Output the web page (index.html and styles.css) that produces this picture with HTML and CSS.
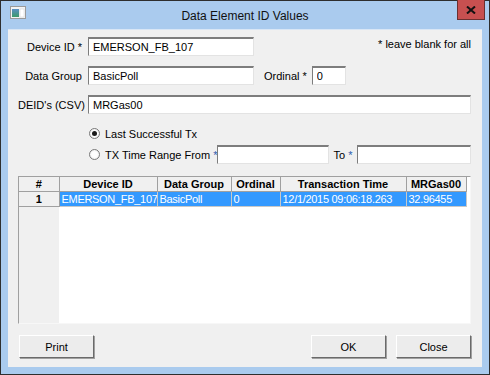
FILE: index.html
```html
<!DOCTYPE html>
<html lang="en">
<head>
  <meta charset="UTF-8" />
  <title>Data Element ID Values</title>
  <link rel="stylesheet" href="styles.css">
</head>
<body>
  <div class="window">
    <div class="titlebar">
      <svg class="app-icon" width="16" height="13" viewBox="0 0 16 13">
        <defs>
          <linearGradient id="ig" x1="0" y1="0" x2="0" y2="1">
            <stop offset="0" stop-color="#5a8fc4"/>
            <stop offset="1" stop-color="#3c9a6a"/>
          </linearGradient>
        </defs>
        <rect x="0.5" y="0.5" width="15" height="12" fill="#f4f4f4" stroke="#9a9a9a"/>
        <rect x="2" y="3" width="7" height="8" fill="url(#ig)"/>
        <rect x="10" y="3" width="4" height="8" fill="#fff" stroke="#d0d0d0" stroke-width="0.5"/>
      </svg>
      <span class="title">Data Element ID Values</span>
      <button class="close-x" title="Close">
        <svg width="10" height="8" viewBox="0 0 10 8"><path d="M1 0.5 L9 7.5 M9 0.5 L1 7.5" stroke="#111" stroke-width="2"/></svg>
      </button>
    </div>

    <div class="client">
      <div class="fila">
        <label class="lbl">Device ID *</label>
        <input class="txt w-med" type="text" value="EMERSON_FB_107">
        <span class="nota">* leave blank for all</span>
      </div>

      <div class="fila">
        <label class="lbl">Data Group</label>
        <input class="txt w-med" type="text" value="BasicPoll">
        <label class="lbl-ord">Ordinal *</label>
        <input class="txt w-ord" type="text" value="0">
      </div>

      <div class="fila">
        <label class="lbl">DEID's (CSV)</label>
        <input class="txt w-full" type="text" value="MRGas00">
      </div>

      <div class="fila radio-fila primera">
        <span class="radio on"></span>
        <span>Last Successful Tx</span>
      </div>

      <div class="fila radio-fila">
        <span class="radio"></span>
        <span class="rango">TX Time Range From <b class="ast">*</b></span>
        <input class="txt w-desde" type="text">
        <span class="lbl-to">To <b class="ast">*</b></span>
        <input class="txt w-hasta" type="text">
      </div>

      <div class="grid">
        <table>
          <colgroup>
            <col style="width:40px"><col style="width:98px"><col style="width:74px">
            <col style="width:49px"><col style="width:126px"><col style="width:60px">
          </colgroup>
          <thead>
            <tr>
              <th>#</th><th>Device ID</th><th>Data Group</th><th>Ordinal</th><th>Transaction Time</th><th>MRGas00</th>
            </tr>
          </thead>
          <tbody>
            <tr class="sel">
              <th>1</th><td>EMERSON_FB_107</td><td>BasicPoll</td><td>0</td><td>12/1/2015 09:06:18.263</td><td>32.96455</td>
            </tr>
          </tbody>
        </table>
      </div>

      <div class="botones">
        <button class="btn">Print</button>
        <span class="relleno"></span>
        <button class="btn">OK</button>
        <button class="btn">Close</button>
      </div>
    </div>
  </div>
</body>
</html>
```

FILE: styles.css
```css
body {
  margin: 0;
  padding: 0;
  font-family: "Liberation Sans", Arial, sans-serif;
  font-size: 11px;
  color: #000;
  background: #fff;
}

.window {
  width: 490px;
  height: 375px;
  box-sizing: border-box;
  border: 1px solid #2e2e2e;
  background: #aacbee;
  display: flex;
  flex-direction: column;
}

/* Barra de titulo */
.titlebar {
  height: 28px;
  display: flex;
  align-items: flex-start;
  position: relative;
}

.app-icon {
  margin: 5px 0 0 9px;
}

.title {
  position: absolute;
  left: 0;
  right: 0;
  top: 8px;
  text-align: center;
  font-size: 12px;
  color: #111;
}

.close-x {
  position: absolute;
  right: 4px;
  top: -1px;
  width: 28px;
  height: 20px;
  padding: 0;
  border: 1px solid #6b3030;
  border-top: none;
  background: #c75050;
  display: flex;
  align-items: center;
  justify-content: center;
}

/* Area de contenido */
.client {
  margin: 0 7px;
  height: 338px;
  box-sizing: border-box;
  background: #f0f0f0;
  border-top: 1px solid #d9e6f5;
  padding: 7px 11px 0 10px;
  display: flex;
  flex-direction: column;
}

.fila {
  display: flex;
  align-items: center;
  height: 19px;
  margin-bottom: 10px;
  white-space: nowrap;
}

.fila > * {
  flex-shrink: 0;
}

.lbl {
  width: 64px;
  text-align: right;
  margin-right: 6px;
}

.nota {
  margin-left: auto;
  align-self: flex-start;
  margin-top: 1px;
}

.lbl-ord {
  margin: 0 5px 0 10px;
}

.txt {
  height: 19px;
  box-sizing: border-box;
  border: 1px solid #e3e3e3;
  border-top: 2px solid #7d7d7d;
  border-left: 1px solid #7d7d7d;
  background: #fff;
  font-family: "Liberation Sans", Arial, sans-serif;
  font-size: 11px;
  padding: 0 4px;
  color: #000;
  outline: none;
}

.w-med { width: 166px; }
.w-ord { width: 34px; }
.w-full { width: 383px; }
.w-desde { width: 112px; }
.w-hasta { width: 114px; }

.lbl-to {
  margin: 0 5px 0 4px;
}

.ast {
  font-weight: normal;
  color: #2a5db0;
}

/* Radios */
.radio-fila {
  padding-left: 70px;
  margin-bottom: 0;
}

.radio-fila.primera {
  margin-bottom: 2px;
}

.radio {
  width: 11px;
  height: 11px;
  box-sizing: border-box;
  border-radius: 50%;
  border: 1px solid #7a7a7a;
  background: radial-gradient(circle, #fff 40%, #e4e4e4 100%);
  margin: 0 5px 0 1px;
  position: relative;
}

.radio.on::after {
  content: "";
  position: absolute;
  left: 2px;
  top: 2px;
  width: 5px;
  height: 5px;
  border-radius: 50%;
  background: #1a1a1a;
}

/* Tabla de resultados */
.grid {
  margin-top: 12px;
  height: 148px;
  box-sizing: border-box;
  border: 1px solid #a0a0a0;
  border-bottom-color: #f7f7f7;
  border-right-color: #f7f7f7;
  background: linear-gradient(to right, #f0f0f0 40px, #fff 40px);
  overflow: hidden;
}

.grid table {
  border-collapse: collapse;
  table-layout: fixed;
  width: 447px;
}

.grid th,
.grid td {
  height: 14px;
  padding: 0 2px;
  white-space: nowrap;
  overflow: hidden;
  line-height: 13px;
}

.grid td {
  padding: 0 1px 0 2px;
  letter-spacing: -0.3px;
}

.grid thead th {
  background: #f0f0f0;
  font-weight: bold;
  text-align: center;
  border-right: 1px solid #a0a0a0;
  border-bottom: 1px solid #a0a0a0;
  height: 14px;
}

.grid tbody th {
  background: #f0f0f0;
  font-weight: bold;
  border-right: 1px solid #a0a0a0;
  border-bottom: 1px solid #a0a0a0;
}

.grid tr.sel td {
  background: #3399ff;
  color: #fff;
  border-right: 1px solid #c8c8c8;
  border-bottom: 1px solid #c8c8c8;
}

/* Botones inferiores */
.botones {
  display: flex;
  margin-top: 11px;
  gap: 10px;
}

.relleno {
  flex-grow: 1;
}

.btn {
  width: 75px;
  height: 23px;
  box-sizing: border-box;
  background: #ececec;
  border: 1px solid #fff;
  border-right-color: #6a6a6a;
  border-bottom-color: #6a6a6a;
  box-shadow: 1px 1px 0 #a0a0a0;
  font-family: "Liberation Sans", Arial, sans-serif;
  font-size: 11px;
  color: #000;
  padding: 0;
}

.btn:first-child {
  margin-left: 1px;
}
```
